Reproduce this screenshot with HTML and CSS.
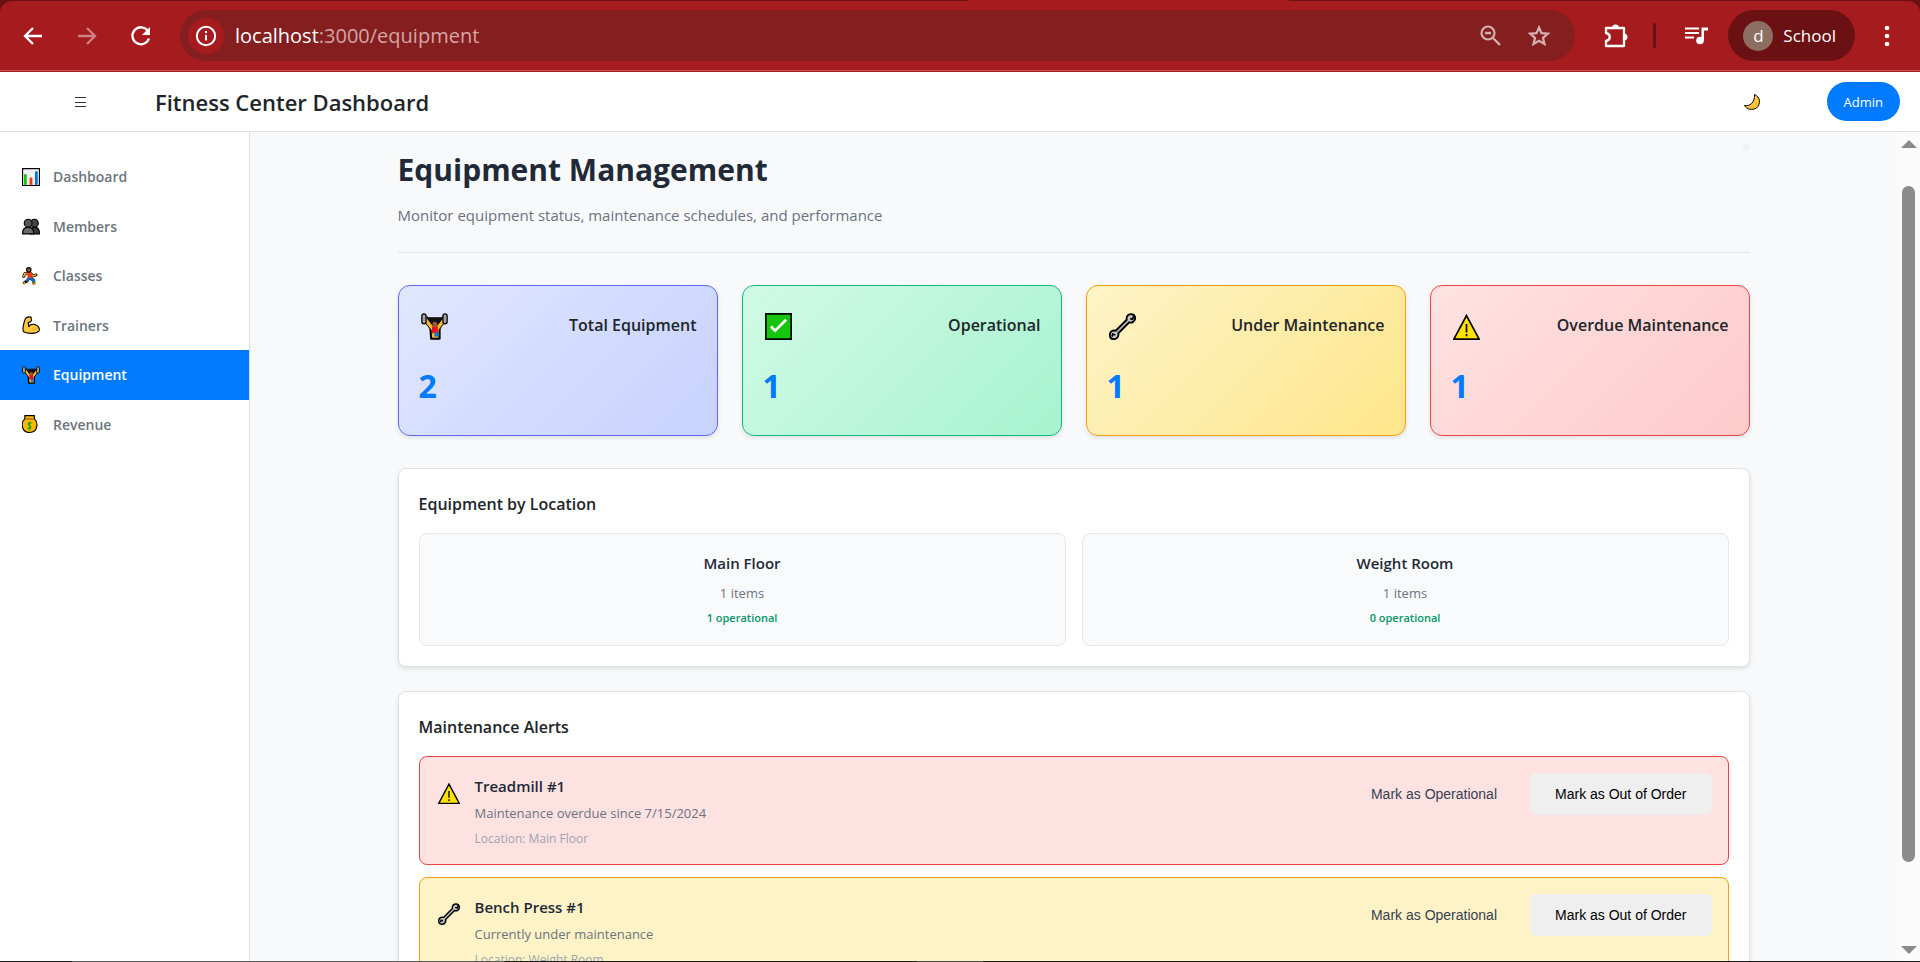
FILE: index.html
```html
<!DOCTYPE html>
<html lang="en">
<head>
<meta charset="utf-8">
<title>Fitness Center Dashboard</title>
<link rel="stylesheet" href="styles.css">
</head>
<body>
<svg class="sprite" aria-hidden="true">
  <symbol id="i-lifter" viewBox="0 0 32 32">
    <path d="M9 5H24L20 13H13Z" fill="#111"/>
    <path d="M5 6 13 17M28 6 20 17" stroke="#000" stroke-width="7"/>
    <path d="M11 15H22V30.500H12Z" fill="#fbb829" stroke="#000" stroke-width="2.500" stroke-linejoin="round"/>
    <path d="M5 6.500H28" stroke="#111" stroke-width="2"/>
    <path d="M5 7 14 19M28 7 19 19" stroke="#fbb829" stroke-width="4"/>
    <path d="M13 16H20V24H13Z" fill="#e81224"/>
    <path d="M16 23H21V28H16Z" fill="#0f78d4"/>
    <circle cx="16.500" cy="13.500" r="3" fill="#9b5a33"/>
    <rect x="1" y="1" width="5" height="12" rx="2.500" fill="#a3a3a3" stroke="#000" stroke-width="1.500"/>
    <rect x="26" y="1" width="5" height="12" rx="2.500" fill="#a3a3a3" stroke="#000" stroke-width="1.500"/>
  </symbol>
  <symbol id="i-check" viewBox="0 0 32 32">
    <path d="M1 1H31V31H1Z" fill="#16c60c" stroke="#000" stroke-width="2"/>
    <path d="M7 16 12 21 25 8" fill="none" stroke="#fff" stroke-width="3"/>
  </symbol>
  <symbol id="i-wrench" viewBox="0 0 32 32">
    <path d="M21 8C20 3 24 1 27 1.500 30 2 31 4 31 7 30 11 27 12 24 11L11 24C12 28 9 31 6 31 3 31 1 29 1 26 1 22 4 20 8 21Z" fill="#c4c4c4" stroke="#000" stroke-width="2.200" stroke-linejoin="round"/>
    <path d="M25 6.500 28 7.500 29 4M3.500 28 4.500 25 7.500 26" fill="none" stroke="#000" stroke-width="2"/>
  </symbol>
  <symbol id="i-warning" viewBox="0 0 32 32">
    <path d="M16 3 31 31H1Z" fill="#ffe000" stroke="#000" stroke-width="2"/>
    <path d="M16 13V23M16 25V27.500" stroke="#000" stroke-width="2"/>
  </symbol>
  <symbol id="i-chart" viewBox="0 0 32 32">
    <path d="M1 1H31V31H1Z" fill="#f2f2f2" stroke="#000" stroke-width="2"/>
    <path d="M6 11V30" stroke="#16c60c" stroke-width="5"/>
    <path d="M16 17V30" stroke="#f03a17" stroke-width="5"/>
    <path d="M25.500 6V30" stroke="#0078d7" stroke-width="5"/>
  </symbol>
  <symbol id="i-people" viewBox="0 0 32 32">
    <path d="M15 30C15 22 18 18 23 18S31 22 31 30Z" fill="#383838" stroke="#000" stroke-width="2"/>
    <circle cx="22" cy="11" r="7" fill="#454545" stroke="#000" stroke-width="2"/>
    <path d="M1 30C1 22 4 18 11 18S21 22 21 30Z" fill="#686868" stroke="#000" stroke-width="2"/>
    <circle cx="11" cy="11" r="7" fill="#565656" stroke="#000" stroke-width="2"/>
  </symbol>
  <symbol id="i-runner" viewBox="0 0 32 32">
    <path d="M12 11 5 12 3 17M15 11 19 16 25 14M13 19 9 25 4 28M15 20 21 24V29" fill="none" stroke="#000" stroke-width="5" stroke-linecap="round" stroke-linejoin="round"/>
    <path d="M12 11 5 12 3 17M15 11 19 16 25 14" fill="none" stroke="#fbb829" stroke-width="2.500" stroke-linecap="round"/>
    <path d="M13 19 9 24M15 20 21 24V26" fill="none" stroke="#0f6fd0" stroke-width="4" stroke-linecap="round"/>
    <path d="M9 9H17L18 19 10 20Z" fill="#e83b24"/>
    <circle cx="12" cy="5" r="4" fill="#9b5a33" stroke="#000" stroke-width="2"/>
    <path d="M3 27 6 30M20 29H25" stroke="#f7a800" stroke-width="3"/>
  </symbol>
  <symbol id="i-arm" viewBox="0 0 32 32">
    <path d="M6 5C8 2 12 1 16 2L17 8 14 11H11L12 19C15 14 21 14 25 16 30 18 32 23 30 27 25 32 10 32 3 28 0 25 3 12 6 5Z" fill="#ffc83d" stroke="#000" stroke-width="2" stroke-linejoin="round"/>
    <path d="M18 24C23 25 27 23 26 20" fill="none" stroke="#d99200"/>
  </symbol>
  <symbol id="i-bag" viewBox="0 0 32 32">
    <path d="M5 1H22V7C29 13 29 31 13.500 31S-2 13 5 7Z" fill="#ffb900" stroke="#000" stroke-width="2" stroke-linejoin="round"/>
    <path d="M6 7H21" stroke="#8e562e" stroke-width="2"/>
    <path d="M17 15C14 12 10 14 11 17S17 19 16 22 11 25 10 22M13.500 12V27" fill="none" stroke="#13a10e" stroke-width="2"/>
  </symbol>
  <symbol id="i-moon" viewBox="0 0 32 32">
    <path d="M21 1C33 6 34 20 25 28 17 33 5 31 1 23 12 25 22 17 21 1Z" fill="#ffc83d" stroke="#000" stroke-width="2" stroke-linejoin="round"/>
    <circle cx="24" cy="20" r="1.500" fill="#e09a1a"/><circle cx="16" cy="26" r="1.500" fill="#e09a1a"/>
  </symbol>
</svg>

<div class="browser">
  <nav class="toolbar" aria-label="Browser">
    <button class="tool" aria-label="Back"><svg viewBox="0 0 24 24"><path d="M21 12H5M12 4 4 12 12 20" fill="none" stroke="#fff" stroke-width="2.300"/></svg></button>
    <button class="tool dim" aria-label="Forward"><svg viewBox="0 0 24 24"><path d="M3 12H19M12 4 20 12 12 20" fill="none" stroke="#fff" stroke-width="2.300"/></svg></button>
    <button class="tool" aria-label="Reload"><svg viewBox="0 0 24 24"><path d="M19 7A8.500 8.500 0 1 0 20 14.500" fill="none" stroke="#fff" stroke-width="2.300"/><path d="M21 3V11H13Z" fill="#fff"/></svg></button>
    <div class="address">
      <button class="site-info" aria-label="Site information"><svg viewBox="0 0 24 24"><circle cx="12" cy="12" r="10" fill="none" stroke="#fff" stroke-width="2.200"/><path d="M12 11V17M12 6.500V9" stroke="#fff" stroke-width="2.200"/></svg></button>
      <a class="url" href="#"><b>localhost</b>:3000/equipment</a>
      <button class="tool soft" aria-label="Zoom"><svg viewBox="0 0 24 24"><circle cx="9" cy="9" r="6.500" fill="none" stroke="#d4b0b0" stroke-width="2.200"/><path d="M6 9H12M14 14 21 21" stroke="#d4b0b0" stroke-width="2.400"/></svg></button>
      <button class="tool soft" aria-label="Bookmark"><svg viewBox="0 0 24 24"><path d="M12 3.500 14.500 9.200 20.800 9.700 16 13.800 17.500 20 12 16.700 6.500 20 8 13.800 3.200 9.700 9.500 9.200Z" fill="none" stroke="#d4b0b0" stroke-width="2.200"/></svg></button>
    </div>
    <button class="tool puzzle" aria-label="Extensions"><svg viewBox="0 0 26 26"><path d="M3 5H21V23H3V18C8 17 8 11 3 10Z" fill="none" stroke="#fff" stroke-width="2.300" stroke-linejoin="round"/><path d="M9 5A3.500 3.500 0 0 1 16 5ZM21 10.500A3.500 3.500 0 0 1 21 17.500Z" fill="#fff"/></svg></button>
    <span class="divider"></span>
    <button class="tool" aria-label="Media"><svg viewBox="0 0 24 24"><path d="M1 4.500H15M1 9H15M1 13.500H10" stroke="#fff" stroke-width="2.200"/><circle cx="16" cy="16.500" r="3.800" fill="#fff"/><path d="M17.500 16.500V3.500H24V6.500H20V16.500Z" fill="#fff"/></svg></button>
    <button class="profile"><span class="avatar">d</span>School</button>
    <button class="tool" aria-label="More"><svg viewBox="0 0 24 24"><circle cx="12" cy="4" r="2.300" fill="#fff"/><circle cx="12" cy="12" r="2.300" fill="#fff"/><circle cx="12" cy="20" r="2.300" fill="#fff"/></svg></button>
  </nav>
</div>

<header class="header">
  <button class="menu" aria-label="Menu"><svg viewBox="0 0 12 12"><path d="M0 1.500H11M0 6.500H11M0 10.500H11" stroke="#333" stroke-width="1"/></svg></button>
  <h1 class="brand">Fitness Center Dashboard</h1>
  <button class="theme" aria-label="Dark mode"><svg><use href="#i-moon"/></svg></button>
  <button class="admin">Admin</button>
</header>

<div class="shell">
  <nav class="sidebar">
    <a class="item" href="#"><svg><use href="#i-chart"/></svg>Dashboard</a>
    <a class="item" href="#"><svg><use href="#i-people"/></svg>Members</a>
    <a class="item" href="#"><svg><use href="#i-runner"/></svg>Classes</a>
    <a class="item" href="#"><svg><use href="#i-arm"/></svg>Trainers</a>
    <a class="item active" href="#"><svg><use href="#i-lifter"/></svg>Equipment</a>
    <a class="item" href="#"><svg><use href="#i-bag"/></svg>Revenue</a>
  </nav>

  <main class="main">
    <div class="page">
      <div class="page-head">
        <span class="dot"></span>
        <h2>Equipment Management</h2>
        <p>Monitor equipment status, maintenance schedules, and performance</p>
      </div>

      <section class="stats">
        <article class="stat total"><div class="stat-top"><svg><use href="#i-lifter"/></svg><h3>Total Equipment</h3></div><p class="value">2</p></article>
        <article class="stat good"><div class="stat-top"><svg><use href="#i-check"/></svg><h3>Operational</h3></div><p class="value">1</p></article>
        <article class="stat warn"><div class="stat-top"><svg><use href="#i-wrench"/></svg><h3>Under Maintenance</h3></div><p class="value">1</p></article>
        <article class="stat bad"><div class="stat-top"><svg><use href="#i-warning"/></svg><h3>Overdue Maintenance</h3></div><p class="value">1</p></article>
      </section>

      <section class="panel">
        <h3>Equipment by Location</h3>
        <div class="places">
          <article class="place"><h4>Main Floor</h4><p class="count">1 items</p><p class="ok">1 operational</p></article>
          <article class="place"><h4>Weight Room</h4><p class="count">1 items</p><p class="ok">0 operational</p></article>
        </div>
      </section>

      <section class="panel">
        <h3>Maintenance Alerts</h3>
        <div class="alerts">
          <article class="alert overdue">
            <svg><use href="#i-warning"/></svg>
            <div class="info"><h4>Treadmill #1</h4><p class="detail">Maintenance overdue since 7/15/2024</p><p class="where">Location: Main Floor</p></div>
            <div class="actions"><button class="btn ghost">Mark as Operational</button><button class="btn">Mark as Out of Order</button></div>
          </article>
          <article class="alert service">
            <svg><use href="#i-wrench"/></svg>
            <div class="info"><h4>Bench Press #1</h4><p class="detail">Currently under maintenance</p><p class="where">Location: Weight Room</p></div>
            <div class="actions"><button class="btn ghost">Mark as Operational</button><button class="btn">Mark as Out of Order</button></div>
          </article>
        </div>
      </section>
    </div>
  </main>

  <div class="scrollbar" aria-hidden="true">
    <span class="arrow up"></span><span class="thumb"></span><span class="arrow down"></span>
  </div>
</div>
<div class="edge"></div>
</body>
</html>
```

FILE: styles.css
```css
* { box-sizing: border-box; margin: 0; padding: 0; }
html, body { height: 100%; }
body {
  display: flex;
  flex-direction: column;
  overflow: hidden;
  background: #fff;
  color: #212529;
  font-family: "Open Sans", "Noto Sans", sans-serif;
  font-size: 15px;
}
button { border: 0; background: none; font: inherit; color: inherit; cursor: pointer; }
a { color: inherit; text-decoration: none; }
svg { display: block; flex: none; }
.sprite { position: absolute; width: 0; height: 0; }

/* browser toolbar */
.browser { flex: none; background: linear-gradient(90deg, #6b1113 968px, #a61c1e 968px, #a61c1e 1289px, #6b1113 1289px); padding-top: 1px; }
.toolbar {
  display: flex;
  align-items: center;
  height: 71px;
  padding: 0 21px 2px 21px;
  background: #a61c1e;
  border-radius: 12px 12px 0 0;
  box-shadow: inset 0 -1px #a61c1e, inset 0 -2px #bd5153;
}
.tool { flex: none; width: 24px; height: 24px; }
.tool svg { width: 100%; height: 100%; }
.tool + .tool { margin-left: 30px; }
.dim { opacity: 0.45; }
.address {
  display: flex;
  flex: 1;
  align-items: center;
  height: 51px;
  margin-left: 27px;
  padding: 0 24px 0 8px;
  border-radius: 26px;
  background: #841e1f;
}
.site-info { display: grid; place-items: center; width: 36px; height: 36px; border-radius: 50%; background: #a61c1e; }
.site-info svg { width: 22px; height: 22px; }
.url { flex: 1; margin-left: 11px; color: #d4a5a5; font-size: 20px; }
.url b { color: #fff; font-weight: 400; }
.address .tool + .tool { margin-left: 24px; }
.puzzle { width: 26px; height: 26px; margin-left: 28px; }
.divider { width: 3px; height: 25px; margin: 0 28px 0 24px; border-radius: 2px; background: #6b1113; }
.profile {
  display: flex;
  align-items: center;
  gap: 10px;
  height: 51px;
  margin: 0 20px;
  padding: 0 19px 0 15px;
  border-radius: 26px;
  background: #6b1113;
  color: #fff;
  font-size: 17px;
}
.avatar { display: grid; place-items: center; width: 30px; height: 30px; border-radius: 50%; background: #8c6e63; font-size: 17px; line-height: 30px; }

/* app header */
.header {
  display: flex;
  flex: none;
  align-items: center;
  height: 60px;
  padding: 0 20px 0 75px;
  border-bottom: 1px solid #dee2e6;
  background: #fff;
}
.menu, .menu svg { width: 12px; height: 12px; }
.brand { flex: 1; margin-left: 68px; font-size: 22px; font-weight: 600; }
.theme, .theme svg { width: 16px; height: 16px; }
.admin { height: 39px; margin-left: 67px; padding: 0 17px; border-radius: 20px; background: #007bff; color: #fff; font-size: 13px; }

.shell { display: flex; flex: 1; min-height: 0; }

/* sidebar */
.sidebar { flex: none; display: grid; grid-auto-rows: 1fr; align-content: start; width: 250px; height: 317px; padding-top: 20px; }
.item { display: flex; align-items: center; gap: 13px; margin-right: 1px; padding: 0 22px; color: #6c757d; font-size: 14px; font-weight: 600; }
.item svg { width: 18px; height: 18px; }
.item.active { background: #007bff; color: #fff; }

/* main */
.main { flex: 1; margin-left: -1px; border-left: 1px solid #dee2e6; background: #f8f9fb; overflow: hidden; }
.page { max-width: 1400px; margin: 0 auto; padding: 14px 24px 0; }
.page-head { position: relative; margin-bottom: 32px; padding-bottom: 25px; border-bottom: 1px solid #e2e5e9; }
.page-head h2 { color: #1f2937; font-size: 30px; font-weight: 700; line-height: 48px; }
.page-head p { margin-top: 9px; color: #6b7280; font-size: 15px; line-height: 24px; }
.dot { position: absolute; top: -3px; right: 0; width: 8px; height: 8px; border-radius: 50%; background: #f1f2f4; }

.stats { display: grid; grid-template-columns: repeat(4, 1fr); gap: 24px; }
.stat { padding: 20px 20px 25px; border: 1px solid; border-radius: 12px; box-shadow: 0 2px 4px rgba(0, 0, 0, 0.1); }
.stat-top { display: flex; align-items: center; justify-content: space-between; height: 40px; padding-left: 2px; }
.stat-top svg { width: 27px; height: 27px; }
.stat h3 { padding-bottom: 2px; color: #212529; font-size: 16px; font-weight: 600; }
.value { margin-top: 16px; color: #007bff; font-size: 32px; font-weight: 700; line-height: 48px; }
.total { border-color: #6366f1; background: linear-gradient(135deg, #e0e7ff, #c7d2fe); }
.good { border-color: #10b981; background: linear-gradient(135deg, #d1fae5, #a7f3d0); }
.warn { border-color: #f59e0b; background: linear-gradient(135deg, #fef3c7, #fde68a); }
.bad { border-color: #ef4444; background: linear-gradient(135deg, #fee2e2, #fecaca); }

.panel { margin-top: 32px; padding: 20px; border: 1px solid #dee2e6; border-radius: 8px; background: #fff; box-shadow: 0 2px 4px rgba(0, 0, 0, 0.1); }
.panel + .panel { margin-top: 24px; }
.panel h3 { margin-bottom: 14px; font-size: 16px; font-weight: 600; line-height: 30px; }
.panel h4 { color: #1f2937; font-size: 15px; font-weight: 600; line-height: 24px; }
.places { display: grid; grid-template-columns: 1fr 1fr; gap: 16px; }
.place { padding: 17px 16px; border: 1px solid #e5e7eb; border-radius: 8px; background: #f9fafb; text-align: center; }
.count { margin-top: 8px; color: #6b7280; font-size: 13px; line-height: 20px; }
.ok { margin-top: 5px; color: #059669; font-size: 11px; font-weight: 600; line-height: 20px; }

.alerts { display: grid; gap: 12px; }
.alert { display: flex; align-items: flex-start; gap: 15px; padding: 16px; border: 1px solid; border-radius: 8px; }
.alert > svg { width: 22px; height: 22px; margin: 9px 0 0 2px; }
.overdue { border-color: #ef4444; background: #fee2e2; }
.service { border-color: #f59e0b; background: #fef3c7; }
.info { flex: 1; padding-top: 1px; }
.detail { margin-top: 5px; color: #6b7280; font-size: 13px; line-height: 20px; }
.where { margin-top: 7px; color: #9ca3af; font-size: 12px; line-height: 18px; }
.actions { display: flex; gap: 8px; }
.btn { height: 42px; padding: 0 25px; border-radius: 6px; background: #efefef; color: #000; font-family: "Liberation Sans", Arial, sans-serif; font-size: 14px; }
.ghost { background: transparent; color: #374151; }

/* scrollbar */
.scrollbar { flex: none; display: flex; flex-direction: column; align-items: center; width: 23px; padding: 8px 0 7px; background: #fbfbfb; }
.arrow { border: 8px solid transparent; }
.up { border-top: 0; border-bottom-color: #8b8b8b; }
.down { border-bottom: 0; border-top-color: #8b8b8b; margin-top: auto; }
.thumb { width: 13px; height: 83%; margin-top: 38px; border-radius: 7px; background: #8b8b8b; }

/* window edge */
.edge { flex: none; height: 1px; background: linear-gradient(90deg, #1c1c1c 72px, #5c5c5c 72px, #5c5c5c 504px, #1c1c1c 504px, #1c1c1c 917px, #4a4a4a 917px, #4a4a4a 983px, #1c1c1c 983px); }
```
